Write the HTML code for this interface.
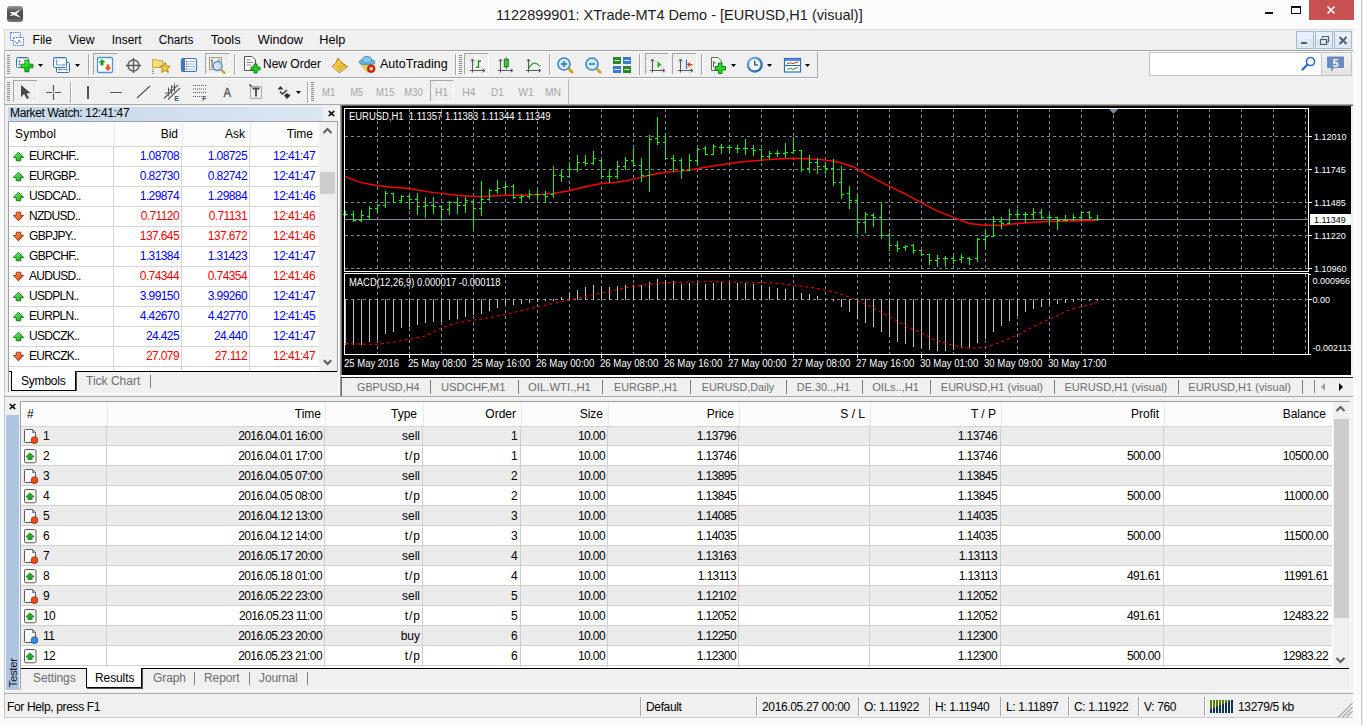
<!DOCTYPE html><html><head><meta charset="utf-8"><style>
*{box-sizing:border-box}
body{margin:0;width:1363px;height:725px;position:relative;overflow:hidden;background:#fbfbfb;font-family:'Liberation Sans', sans-serif;font-size:12px;color:#000}
.a{position:absolute}
.t{position:absolute;white-space:nowrap;line-height:20px;height:20px}
.r{text-align:right}
.n{letter-spacing:-0.6px}
.l{letter-spacing:-0.35px}
svg{position:absolute;overflow:visible}
</style></head><body>

<div class="a" style="left:0;top:0;width:1363px;height:29px;background:#fbfbfb"></div>
<div class="a" style="left:7px;top:6px;width:16px;height:15.5px;border-radius:3px;background:linear-gradient(#9a9a9a 0,#555 35%,#4a4a4a 70%,#7a7a7a 100%)"></div>
<svg style="left:7px;top:6px" width="16" height="16"><path d="M2.5 6 L7.5 6.3 L13.8 3.6 L9.6 7.8 L14.1 12 L7.3 9.2 L2.2 9.9 L5.2 7.9 Z" fill="#fff"/></svg>
<div class="t" style="left:496px;top:5px;font-size:14.5px;color:#222">1122899901: XTrade-MT4 Demo - [EURUSD,H1 (visual)]</div>
<div class="a" style="left:1265px;top:12px;width:8px;height:2px;background:#111"></div>
<div class="a" style="left:1291px;top:6px;width:10px;height:8px;border:1px solid #111;border-top-width:2px"></div>
<div class="a" style="left:1309px;top:0;width:45px;height:20px;background:#c75050"></div>
<svg style="left:1309px;top:0" width="45" height="20"><path d="M18.5 6.5 L25.5 13.5 M25.5 6.5 L18.5 13.5" stroke="#fff" stroke-width="1.6"/></svg>
<div class="a" style="left:1361px;top:0;width:1px;height:725px;background:#c9c9c9"></div><div class="a" style="left:1362px;top:0;width:1px;height:725px;background:#ececec"></div>
<div class="a" style="left:4px;top:29px;width:1349px;height:22px;background:#f0f0f0;border-top:1px solid #dadada;border-left:1px solid #dadada;border-bottom:1px solid #a0a0a0"></div>
<svg style="left:9px;top:31px" width="18" height="16"><rect x="1.5" y="1.5" width="10" height="8" fill="#eef4ff" stroke="#4a7fe8" stroke-dasharray="1.5,0.8"/><rect x="4.5" y="6.5" width="10" height="8" fill="#fff" stroke="#4a7fe8" stroke-dasharray="1.5,0.8"/><path d="M6 10 L8 13 L10 9 L12 12" stroke="#4a7fe8" fill="none" stroke-width="0.9"/></svg>
<svg style="left:0;top:0" width="400" height="50" font-family="Liberation Sans"><text x="32.6" y="44" font-size="12.5" fill="#000" textLength="19.4" lengthAdjust="spacingAndGlyphs">File</text><text x="68.4" y="44" font-size="12.5" fill="#000" textLength="26.2" lengthAdjust="spacingAndGlyphs">View</text><text x="111.80000000000001" y="44" font-size="12.5" fill="#000" textLength="29.7" lengthAdjust="spacingAndGlyphs">Insert</text><text x="158.8" y="44" font-size="12.5" fill="#000" textLength="34.6" lengthAdjust="spacingAndGlyphs">Charts</text><text x="210.70000000000002" y="44" font-size="12.5" fill="#000" textLength="29.9" lengthAdjust="spacingAndGlyphs">Tools</text><text x="257.7" y="44" font-size="12.5" fill="#000" textLength="45.2" lengthAdjust="spacingAndGlyphs">Window</text><text x="319.29999999999995" y="44" font-size="12.5" fill="#000" textLength="26.099999999999998" lengthAdjust="spacingAndGlyphs">Help</text></svg>
<div class="a" style="left:1296px;top:31px;width:18px;height:18px;background:linear-gradient(#e8f1fb 0,#e8f1fb 45%,#dce9f7 46%,#dce9f7);border:1px solid #a6bad0"></div>
<div class="a" style="left:1315px;top:31px;width:18px;height:18px;background:linear-gradient(#e8f1fb 0,#e8f1fb 45%,#dce9f7 46%,#dce9f7);border:1px solid #a6bad0"></div>
<div class="a" style="left:1334px;top:31px;width:18px;height:18px;background:linear-gradient(#e8f1fb 0,#e8f1fb 45%,#dce9f7 46%,#dce9f7);border:1px solid #a6bad0"></div>
<div class="a" style="left:1301px;top:42px;width:6px;height:2px;background:#555d66"></div>
<svg style="left:1315px;top:31px" width="18" height="18"><rect x="5.5" y="8.5" width="6" height="5" fill="none" stroke="#555d66" stroke-width="1.2"/><path d="M7.5 7 V5.5 H13.5 V11 H12" fill="none" stroke="#555d66" stroke-width="1.2"/></svg>
<svg style="left:1334px;top:31px" width="18" height="18"><path d="M5.5 6 L12.5 13 M12.5 6 L5.5 13" stroke="#555d66" stroke-width="2"/></svg>
<div class="a" style="left:4px;top:51px;width:1349px;height:54px;background:#f0f0f0;border-top:1px solid #fff;border-left:1px solid #b9b9b9;border-bottom:1px solid #a9a9a9"></div>
<div class="a" style="left:5px;top:77px;width:813px;height:1px;background:#a9a9a9"></div>
<div class="a" style="left:5px;top:78px;width:813px;height:1px;background:#fff"></div>
<div class="a" style="left:7px;top:55px;width:3px;height:19px;background:repeating-linear-gradient(#8e8e8e 0,#8e8e8e 1px,transparent 1px,transparent 2px)"></div>
<div class="a" style="left:7px;top:82px;width:3px;height:19px;background:repeating-linear-gradient(#8e8e8e 0,#8e8e8e 1px,transparent 1px,transparent 2px)"></div>
<svg style="left:15px;top:56px" width="20" height="18"><defs><linearGradient id="gpl" x1="0" y1="0" x2="0.6" y2="1"><stop offset="0" stop-color="#a8ffa8"/><stop offset="0.5" stop-color="#22e022"/><stop offset="1" stop-color="#08a808"/></linearGradient></defs><rect x="1.5" y="1.5" width="12" height="10" rx="1" fill="#fafcff" stroke="#2f74c0"/><path d="M2 2.5 H13.5" stroke="#b8d4f0"/><path d="M4.5 4.5 V9.5 M3.3 5.8 L4.5 4.5 L5.7 5.8 M3.3 8.2 L4.5 9.5 L5.7 8.2" stroke="#7a98b8" fill="none"/><path d="M9.9 4.2 H13.9 V8.2 H17.9 V11.8 H13.9 V15.8 H9.9 V11.8 H6.2 V8.2 H9.9 Z" fill="url(#gpl)" stroke="#067a06" stroke-width="0.9"/></svg>
<svg style="left:38px;top:64px" width="6" height="4"><path d="M0 0 H5 L2.5 3 Z" fill="#000"/></svg>
<svg style="left:52px;top:56px" width="20" height="18"><rect x="4.5" y="6.5" width="13" height="10" rx="1" fill="#fafcff" stroke="#2f74c0"/><rect x="1.5" y="1.5" width="13" height="10" rx="1" fill="#fafcff" stroke="#2f74c0"/><path d="M2 2.5 H14" stroke="#b8d4f0"/><path d="M4.5 4 V9 H12.5 M3.3 5.2 L4.5 4 L5.7 5.2 M11.3 7.8 L12.5 9 L11.3 10.2 M6.5 13.5 H15.5 M7.7 12.3 L6.5 13.5 L7.7 14.7 M14.3 12.3 L15.5 13.5 L14.3 14.7" stroke="#7a98b8" fill="none"/></svg>
<svg style="left:75px;top:64px" width="6" height="4"><path d="M0 0 H5 L2.5 3 Z" fill="#000"/></svg>
<div class="a" style="left:88px;top:54px;width:1px;height:21px;background:#a8a8a8;box-shadow:1px 0 0 #fff"></div>
<div class="a" style="left:93px;top:53px;width:25px;height:22px;border:1px solid #a6a6a6;border-right-color:#fff;border-bottom-color:#fff;background:#f6f6f6 repeating-linear-gradient(45deg,#e9e9e9 0,#e9e9e9 1px,#f6f6f6 1px,#f6f6f6 2px)"></div>
<svg style="left:96px;top:56px" width="18" height="18"><rect x="1.5" y="1.5" width="15" height="15" rx="1.5" fill="#fff" stroke="#4f95dc" stroke-width="1.3"/><path d="M6 3 L9.5 6.5 H7.5 V9.5 H4.5 V6.5 H2.5 Z" fill="#17a517"/><path d="M12 15 L8.5 11.5 H10.5 V8.5 H13.5 V11.5 H15.5 Z" fill="#e8542a"/></svg>
<svg style="left:125px;top:57px" width="18" height="18"><circle cx="8.5" cy="8.5" r="5.5" fill="none" stroke="#5a5a5a" stroke-width="1.4"/><path d="M8.5 1 V16 M1 8.5 H16" stroke="#5a5a5a" stroke-width="1.4"/></svg>
<svg style="left:151px;top:56px" width="20" height="20"><path d="M1.5 3.5 H5.5 L6.5 4.5 H11.5 V11.5 H1.5 Z" fill="#f5dc7a" stroke="#c9a640"/><path d="M14 6.5 L15.6 10 L19.3 10.3 L16.5 12.7 L17.4 16.5 L14 14.5 L10.6 16.5 L11.5 12.7 L8.7 10.3 L12.4 10 Z" fill="#f0c838" stroke="#b08a20"/><path d="M2 13 V18" stroke="#333" stroke-dasharray="1,1"/></svg>
<svg style="left:180px;top:57px" width="18" height="16"><rect x="1.5" y="1.5" width="15" height="13" rx="1.5" fill="#fff" stroke="#3b78c2" stroke-width="1.2"/><rect x="2" y="2" width="3" height="12" fill="#3b78c2"/><path d="M7 4.5 H15 M7 7 H15 M7 9.5 H15 M7 12 H15" stroke="#9ab8e0"/><path d="M6 4.5 H7 M6 9.5 H7" stroke="#e02020"/><path d="M6 7 H7 M6 12 H7" stroke="#222"/></svg>
<div class="a" style="left:205px;top:53px;width:25px;height:22px;border:1px solid #a6a6a6;border-right-color:#fff;border-bottom-color:#fff;background:#f6f6f6 repeating-linear-gradient(45deg,#e9e9e9 0,#e9e9e9 1px,#f6f6f6 1px,#f6f6f6 2px)"></div>
<svg style="left:208px;top:56px" width="20" height="20"><rect x="1.5" y="1.5" width="12" height="12" fill="#f3f0e6" stroke="#a09a80"/><path d="M4 3 V12 M11 3 V12 M3 5 H5 M10 8 H12" stroke="#666"/><circle cx="9.5" cy="10" r="4.5" fill="#cfe3f5" fill-opacity="0.85" stroke="#5a8fc8" stroke-width="1.5"/><path d="M12.8 13.3 L17 17.5" stroke="#c8a020" stroke-width="2.2"/></svg>
<div class="a" style="left:234px;top:54px;width:1px;height:21px;background:#a8a8a8;box-shadow:1px 0 0 #fff"></div>
<svg style="left:243px;top:55px" width="20" height="20"><path d="M1.5 1.5 H9 L12.5 5 V15.5 H1.5 Z" fill="#fff" stroke="#555"/><path d="M3.5 5 H8 M3.5 7.5 H10 M3.5 10 H8" stroke="#888"/><path d="M11 9 H14 V12 H17 V15 H14 V18 H11 V15 H8 V12 H11 Z" fill="#22cc22" stroke="#0a8a0a"/></svg>
<div class="t" style="left:263px;top:54px;font-size:12px">New Order</div>
<svg style="left:330px;top:56px" width="20" height="18"><defs><linearGradient id="gme" x1="0" y1="0" x2="1" y2="1"><stop offset="0" stop-color="#ffe860"/><stop offset="1" stop-color="#d09810"/></linearGradient></defs><path d="M8.2 2.1 Q9 5 17.4 10.7 L9.5 16.7 L2.3 10.9 Q6 8 8.2 2.1 Z" fill="url(#gme)" stroke="#a86a10" stroke-width="0.9"/><path d="M3.5 11.5 L9.5 15.5 L16 10.8" fill="none" stroke="#f8e8b0" stroke-width="0.9"/></svg>
<svg style="left:357px;top:55px" width="20" height="20"><path d="M3 8.5 H18 L11 17.5 Z" fill="#f2d84a" stroke="#c8a020" stroke-width="0.8"/><ellipse cx="10" cy="7" rx="8" ry="2.8" fill="#6ab6e6" stroke="#3a86b6" stroke-width="0.8"/><ellipse cx="10" cy="4.8" rx="4.6" ry="3.3" fill="#82c6f0" stroke="#3a86b6" stroke-width="0.8"/><circle cx="14.2" cy="13.7" r="3.8" fill="#e42810" stroke="#a81008" stroke-width="0.8"/><rect x="12.8" y="12.3" width="2.8" height="2.8" fill="#fff"/></svg>
<div class="t" style="left:380px;top:54px;font-size:12.5px">AutoTrading</div>
<div class="a" style="left:455px;top:54px;width:1px;height:21px;background:#a8a8a8;box-shadow:1px 0 0 #fff"></div>
<div class="a" style="left:459px;top:55px;width:3px;height:19px;background:repeating-linear-gradient(#8e8e8e 0,#8e8e8e 1px,transparent 1px,transparent 2px)"></div>
<div class="a" style="left:464px;top:53px;width:25px;height:22px;border:1px solid #a6a6a6;border-right-color:#fff;border-bottom-color:#fff;background:#f6f6f6 repeating-linear-gradient(45deg,#e9e9e9 0,#e9e9e9 1px,#f6f6f6 1px,#f6f6f6 2px)"></div>
<svg style="left:469px;top:57px" width="18" height="18"><path d="M3.5 2.5 V15.5 M1 13.5 H15.5" stroke="#5a5a5a" stroke-width="1.1" fill="none"/><path d="M1.8 4.3 L3.5 2 L5.2 4.3 M13.6 11.8 L16 13.5 L13.6 15.2" stroke="#5a5a5a" fill="none"/><path d="M9.5 3.5 V11 M9.5 4 H12 M7 10.3 H9.5" stroke="#1e8a1e" stroke-width="1.3" fill="none"/></svg>
<svg style="left:497px;top:57px" width="18" height="18"><path d="M3.5 2.5 V15.5 M1 13.5 H15.5" stroke="#5a5a5a" stroke-width="1.1" fill="none"/><path d="M1.8 4.3 L3.5 2 L5.2 4.3 M13.6 11.8 L16 13.5 L13.6 15.2" stroke="#5a5a5a" fill="none"/><path d="M9.3 0.5 V12" stroke="#1a6a1a"/><rect x="7.3" y="2.3" width="4" height="7.4" fill="#3ccc3c" stroke="#1a7a1a"/></svg>
<svg style="left:525px;top:57px" width="18" height="18"><path d="M3.5 2.5 V15.5 M1 13.5 H15.5" stroke="#5a5a5a" stroke-width="1.1" fill="none"/><path d="M1.8 4.3 L3.5 2 L5.2 4.3 M13.6 11.8 L16 13.5 L13.6 15.2" stroke="#5a5a5a" fill="none"/><path d="M4 11 Q9 2 15 9.5" stroke="#2a9a2a" stroke-width="1.2" fill="none"/></svg>
<div class="a" style="left:549px;top:54px;width:1px;height:21px;background:#a8a8a8;box-shadow:1px 0 0 #fff"></div>
<svg style="left:556px;top:56px" width="20" height="20"><circle cx="8" cy="8" r="6" fill="#d8ecfb" stroke="#3a86d0" stroke-width="1.6"/><path d="M5 8 H11 M8 5 V11" stroke="#3a86d0" stroke-width="1.8"/><path d="M12.5 12.5 L17 17" stroke="#d0a020" stroke-width="2.6"/></svg>
<svg style="left:584px;top:56px" width="20" height="20"><circle cx="8" cy="8" r="6" fill="#d8ecfb" stroke="#3a86d0" stroke-width="1.6"/><path d="M5 8 H11" stroke="#3a86d0" stroke-width="1.8"/><path d="M12.5 12.5 L17 17" stroke="#d0a020" stroke-width="2.6"/></svg>
<svg style="left:612px;top:56px" width="20" height="18"><rect x="1" y="1" width="8" height="7" fill="#2a8a2a"/><rect x="11" y="1" width="8" height="7" fill="#3a7ad0"/><rect x="1" y="10" width="8" height="7" fill="#3a7ad0"/><rect x="11" y="10" width="8" height="7" fill="#2a8a2a"/><path d="M2.5 4.5 H7.5 M12.5 4.5 H17.5 M2.5 13.5 H7.5 M12.5 13.5 H17.5" stroke="#fff"/></svg>
<div class="a" style="left:639px;top:54px;width:1px;height:21px;background:#a8a8a8;box-shadow:1px 0 0 #fff"></div>
<div class="a" style="left:645px;top:53px;width:24px;height:22px;border:1px solid #a6a6a6;border-right-color:#fff;border-bottom-color:#fff;background:#f6f6f6 repeating-linear-gradient(45deg,#e9e9e9 0,#e9e9e9 1px,#f6f6f6 1px,#f6f6f6 2px)"></div>
<svg style="left:649px;top:57px" width="18" height="18"><path d="M3.5 2.5 V15.5 M1 13.5 H15.5" stroke="#5a5a5a" stroke-width="1.1" fill="none"/><path d="M1.8 4.3 L3.5 2 L5.2 4.3 M13.6 11.8 L16 13.5 L13.6 15.2" stroke="#5a5a5a" fill="none"/><path d="M8.5 4.3 L12.5 7.6 L8.5 11 Z" fill="#2aaa2a"/></svg>
<div class="a" style="left:672px;top:53px;width:25px;height:22px;border:1px solid #a6a6a6;border-right-color:#fff;border-bottom-color:#fff;background:#f6f6f6 repeating-linear-gradient(45deg,#e9e9e9 0,#e9e9e9 1px,#f6f6f6 1px,#f6f6f6 2px)"></div>
<svg style="left:677px;top:57px" width="18" height="18"><path d="M3.5 2.5 V15.5 M1 13.5 H15.5" stroke="#5a5a5a" stroke-width="1.1" fill="none"/><path d="M1.8 4.3 L3.5 2 L5.2 4.3 M13.6 11.8 L16 13.5 L13.6 15.2" stroke="#5a5a5a" fill="none"/><path d="M9.5 3 V12" stroke="#2a6ab0" stroke-width="1.2"/><path d="M15.5 7.6 H11 M13 5.6 L11 7.6 L13 9.6" stroke="#d84010" stroke-width="1.3" fill="none"/></svg>
<div class="a" style="left:701px;top:54px;width:1px;height:21px;background:#a8a8a8;box-shadow:1px 0 0 #fff"></div>
<svg style="left:710px;top:56px" width="20" height="20"><path d="M1.5 1.5 H8 L11.5 5 V14.5 H1.5 Z" fill="#fafafa" stroke="#666"/><path d="M3.5 5 V11 M3.5 7 H6" stroke="#666" fill="none"/><path d="M8.5 7 H12 V10.5 H15.5 V14 H12 V17.5 H8.5 V14 H5 V10.5 H8.5 Z" fill="#2ad42a" stroke="#0a8a0a"/></svg>
<svg style="left:731px;top:64px" width="6" height="4"><path d="M0 0 H5 L2.5 3 Z" fill="#000"/></svg>
<svg style="left:746px;top:56px" width="18" height="18"><defs><radialGradient id="gcl" cx="0.35" cy="0.3" r="0.8"><stop offset="0" stop-color="#8ac8ff"/><stop offset="1" stop-color="#1a58b0"/></radialGradient></defs><circle cx="8.8" cy="8.7" r="8" fill="url(#gcl)"/><circle cx="8.8" cy="8.7" r="5.6" fill="#f4f8fc"/><path d="M8.8 4.8 V9 H12" stroke="#222" stroke-width="1.1" fill="none"/></svg>
<svg style="left:767px;top:64px" width="6" height="4"><path d="M0 0 H5 L2.5 3 Z" fill="#000"/></svg>
<svg style="left:783px;top:57px" width="20" height="16"><rect x="1.5" y="1.5" width="16" height="13.5" fill="#fff" stroke="#2f6fc0" stroke-width="1.2"/><rect x="2" y="2" width="15" height="2" fill="#5a90d8"/><path d="M2 8.5 H17" stroke="#2f6fc0"/><path d="M4 7 L7 5.8 L10 6.5 L15 5" stroke="#c03020" fill="none"/><path d="M4 12.5 L7 11.2 L10 12.5 L15 10.5" stroke="#2a9a2a" fill="none"/></svg>
<svg style="left:805px;top:64px" width="6" height="4"><path d="M0 0 H5 L2.5 3 Z" fill="#000"/></svg>
<div class="a" style="left:817px;top:52px;width:1px;height:25px;background:#a9a9a9"></div>
<div class="a" style="left:1149px;top:52px;width:172px;height:24px;background:#fff;border:1px solid #c3c3c3;border-right:none"></div>
<svg style="left:1300px;top:56px" width="18" height="16"><circle cx="10.5" cy="5.5" r="4" fill="none" stroke="#2f6fd0" stroke-width="1.6"/><path d="M7.5 8.5 L2.5 13.5" stroke="#2f6fd0" stroke-width="2.4" stroke-linecap="round"/></svg>
<div class="a" style="left:1321px;top:52px;width:31px;height:24px;background:linear-gradient(#f3f3f3,#e3e3e3);border:1px solid #c3c3c3"></div>
<svg style="left:1326px;top:56px" width="20" height="18"><path d="M1 1.5 Q1 0.5 2 0.5 H17 Q18 0.5 18 1.5 V11 Q18 12 17 12 H8 L5 15.5 V12 H2 Q1 12 1 11 Z" fill="#6a8bc4"/><text x="9.5" y="10.5" text-anchor="middle" font-size="11" font-weight="bold" font-family="Liberation Sans" fill="#fff">5</text></svg>
<div class="a" style="left:13px;top:80px;width:25px;height:22px;border:1px solid #a6a6a6;border-right-color:#fff;border-bottom-color:#fff;background:#f6f6f6 repeating-linear-gradient(45deg,#e9e9e9 0,#e9e9e9 1px,#f6f6f6 1px,#f6f6f6 2px)"></div>
<svg style="left:19px;top:84px" width="14" height="16"><path d="M2 1 L2 13 L5 10 L8 15 L10 14 L7.5 9.5 L11.5 9 Z" fill="#4a4a4a"/></svg>
<svg style="left:45px;top:84px" width="18" height="18"><path d="M8.5 1 V7.5 M8.5 9.5 V16 M1 8.5 H7.5 M9.5 8.5 H16" stroke="#555" stroke-width="1.2"/></svg>
<div class="a" style="left:70px;top:82px;width:1px;height:21px;background:#a8a8a8;box-shadow:1px 0 0 #fff"></div>
<div class="a" style="left:87px;top:86px;width:2px;height:13px;background:#555"></div>
<div class="a" style="left:110px;top:92px;width:12px;height:1px;background:#555"></div>
<svg style="left:136px;top:85px" width="16" height="14"><path d="M1 13 L14 1" stroke="#555" stroke-width="1.1"/></svg>
<svg style="left:150px;top:78px" width="40" height="27"><path d="M14 20.5 L28 7 M18 21.5 L30 10" stroke="#5a5a5a" stroke-width="1.1" fill="none"/><path d="M18.5 9.5 V18.5 M21.5 7 V16 M24.5 5.5 V13.5 M15 15 H18 M19 12 H22 M22 9 H25" stroke="#5a5a5a" fill="none"/><text x="24.5" y="23" font-size="6.5" font-weight="bold" font-family="Liberation Sans" fill="#4a4a4a">E</text></svg>
<svg style="left:190px;top:78px" width="20" height="27"><path d="M3 7.5 H16.5 M3 11 H16.5 M3 14.5 H16.5 M3 18.5 H12" stroke="#5a5a5a" stroke-dasharray="1,1"/><text x="12.3" y="23" font-size="6.5" font-weight="bold" font-family="Liberation Sans" fill="#4a4a4a">F</text></svg>
<svg style="left:220px;top:78px" width="16" height="27"><text x="3.5" y="18.8" font-size="12" font-family="Liberation Sans" fill="#555" stroke="#555" stroke-width="0.35" textLength="7.5" lengthAdjust="spacingAndGlyphs">A</text></svg>
<svg style="left:248px;top:84px" width="16" height="16"><rect x="2.5" y="2.5" width="11" height="12" fill="none" stroke="#666" stroke-dasharray="1,1"/><path d="M1 1 H3 V3" stroke="#222" fill="none"/><path d="M4.5 4.5 H11.5 M8 4.5 V12.5" stroke="#4a4a4a" stroke-width="1.8"/></svg>
<svg style="left:276px;top:84px" width="18" height="18"><path d="M1.5 5.5 L4.5 2 L7.5 5.5 Z" fill="#333"/><path d="M4 7.5 L6.5 10 L11 6" stroke="#333" stroke-width="1.5" fill="none"/><path d="M8 11.5 L11 9 L14.5 11.5 L11 15 Z" fill="#333"/></svg>
<svg style="left:296px;top:91px" width="6" height="4"><path d="M0 0 H5 L2.5 3 Z" fill="#000"/></svg>
<div class="a" style="left:307px;top:82px;width:1px;height:21px;background:#a8a8a8;box-shadow:1px 0 0 #fff"></div>
<div class="a" style="left:311px;top:82px;width:3px;height:19px;background:repeating-linear-gradient(#8e8e8e 0,#8e8e8e 1px,transparent 1px,transparent 2px)"></div>
<div class="a" style="left:430px;top:80px;width:24px;height:22px;border:1px solid #a6a6a6;border-right-color:#fff;border-bottom-color:#fff;background:#f6f6f6 repeating-linear-gradient(45deg,#e9e9e9 0,#e9e9e9 1px,#f6f6f6 1px,#f6f6f6 2px)"></div>
<svg style="left:0;top:0" width="1363" height="110" font-family="Liberation Sans"><text x="322.1" y="96.2" font-size="11" fill="#a6a6a6" textLength="13.3" lengthAdjust="spacingAndGlyphs">M1</text><text x="350.5" y="96.2" font-size="11" fill="#a6a6a6" textLength="12.7" lengthAdjust="spacingAndGlyphs">M5</text><text x="375.9" y="96.2" font-size="11" fill="#a6a6a6" textLength="18.6" lengthAdjust="spacingAndGlyphs">M15</text><text x="404.3" y="96.2" font-size="11" fill="#a6a6a6" textLength="18.4" lengthAdjust="spacingAndGlyphs">M30</text><text x="435.1" y="96.2" font-size="11" fill="#a6a6a6" textLength="12.9" lengthAdjust="spacingAndGlyphs">H1</text><text x="462.2" y="96.2" font-size="11" fill="#a6a6a6" textLength="13.3" lengthAdjust="spacingAndGlyphs">H4</text><text x="491.0" y="96.2" font-size="11" fill="#a6a6a6" textLength="12.9" lengthAdjust="spacingAndGlyphs">D1</text><text x="518.3" y="96.2" font-size="11" fill="#a6a6a6" textLength="15.4" lengthAdjust="spacingAndGlyphs">W1</text><text x="545.0" y="96.2" font-size="11" fill="#a6a6a6" textLength="16" lengthAdjust="spacingAndGlyphs">MN</text></svg>
<div class="a" style="left:568px;top:79px;width:1px;height:25px;background:#b9b9b9"></div>
<div class="a" style="left:4px;top:105px;width:337px;height:292px;background:#f0f0f0;border-left:1px solid #c4c4c4"></div>
<div class="a" style="left:4px;top:104px;width:337px;height:1px;background:#a9a9a9"></div>
<div class="a" style="left:8px;top:107px;width:315px;height:14px;background:linear-gradient(90deg,#c5d7eb,#dbe6f2)"></div>
<div class="t l" style="left:10px;top:104px;line-height:19px">Market Watch: 12:41:47</div>
<svg style="left:327px;top:109px" width="9" height="9"><path d="M1.8 2 L7.2 7 M7.2 2 L1.8 7" stroke="#000" stroke-width="1.7"/></svg>
<div class="a" style="left:8px;top:121px;width:330px;height:251px;background:#fff;border:1px solid #a0a0a0;border-bottom:none"></div>
<div class="a" style="left:9px;top:122px;width:310px;height:24px;background:#fcfcfc"></div>
<div class="a" style="left:114px;top:122px;width:1px;height:24px;background:#e3ebf5"></div>
<div class="a" style="left:182px;top:122px;width:1px;height:24px;background:#e3ebf5"></div>
<div class="a" style="left:250px;top:122px;width:1px;height:24px;background:#e3ebf5"></div>
<div class="t" style="left:15px;top:124px;letter-spacing:0.2px">Symbol</div>
<div class="t r" style="left:118px;width:60px;top:124px">Bid</div>
<div class="t r" style="left:185px;width:60px;top:124px">Ask</div>
<div class="t r" style="left:253px;width:60px;top:124px">Time</div>
<div class="a" style="left:9px;top:146px;width:310px;height:1px;background:#d5d5d5"></div>
<div class="a" style="left:9px;top:166px;width:310px;height:1px;background:#d5d5d5"></div>
<div class="a" style="left:9px;top:186px;width:310px;height:1px;background:#d5d5d5"></div>
<div class="a" style="left:9px;top:206px;width:310px;height:1px;background:#d5d5d5"></div>
<div class="a" style="left:9px;top:226px;width:310px;height:1px;background:#d5d5d5"></div>
<div class="a" style="left:9px;top:246px;width:310px;height:1px;background:#d5d5d5"></div>
<div class="a" style="left:9px;top:266px;width:310px;height:1px;background:#d5d5d5"></div>
<div class="a" style="left:9px;top:286px;width:310px;height:1px;background:#d5d5d5"></div>
<div class="a" style="left:9px;top:306px;width:310px;height:1px;background:#d5d5d5"></div>
<div class="a" style="left:9px;top:326px;width:310px;height:1px;background:#d5d5d5"></div>
<div class="a" style="left:9px;top:346px;width:310px;height:1px;background:#d5d5d5"></div>
<div class="a" style="left:9px;top:366px;width:310px;height:1px;background:#d5d5d5"></div>
<div class="a" style="left:113px;top:147px;width:1px;height:225px;background:#d5d5d5"></div>
<div class="a" style="left:181px;top:147px;width:1px;height:225px;background:#d5d5d5"></div>
<div class="a" style="left:249px;top:147px;width:1px;height:225px;background:#d5d5d5"></div>
<svg style="left:13px;top:151px" width="11" height="11"><defs><linearGradient id="gu" x1="0" y1="0" x2="1" y2="1"><stop offset="0" stop-color="#7ef07e"/><stop offset="1" stop-color="#12a012"/></linearGradient><linearGradient id="gd" x1="0" y1="0" x2="1" y2="1"><stop offset="0" stop-color="#ff9a6a"/><stop offset="1" stop-color="#e03a08"/></linearGradient></defs><path d="M5.5 1.2 L10.6 6.4 H7.8 V9.2 Q7.8 9.8 7.2 9.8 H3.8 Q3.2 9.8 3.2 9.2 V6.4 H0.4 Z" fill="url(#gu)" stroke="#0a700a" stroke-width="0.9"/></svg>
<div class="t" style="left:29px;top:146px;letter-spacing:-0.7px">EURCHF..</div>
<div class="t r n" style="left:119px;width:60px;top:146px;color:#0000ff">1.08708</div>
<div class="t r n" style="left:187px;width:60px;top:146px;color:#0000ff">1.08725</div>
<div class="t r n" style="left:255px;width:60px;top:146px;color:#0000ff">12:41:47</div>
<svg style="left:13px;top:171px" width="11" height="11"><defs><linearGradient id="gu" x1="0" y1="0" x2="1" y2="1"><stop offset="0" stop-color="#7ef07e"/><stop offset="1" stop-color="#12a012"/></linearGradient><linearGradient id="gd" x1="0" y1="0" x2="1" y2="1"><stop offset="0" stop-color="#ff9a6a"/><stop offset="1" stop-color="#e03a08"/></linearGradient></defs><path d="M5.5 1.2 L10.6 6.4 H7.8 V9.2 Q7.8 9.8 7.2 9.8 H3.8 Q3.2 9.8 3.2 9.2 V6.4 H0.4 Z" fill="url(#gu)" stroke="#0a700a" stroke-width="0.9"/></svg>
<div class="t" style="left:29px;top:166px;letter-spacing:-0.7px">EURGBP..</div>
<div class="t r n" style="left:119px;width:60px;top:166px;color:#0000ff">0.82730</div>
<div class="t r n" style="left:187px;width:60px;top:166px;color:#0000ff">0.82742</div>
<div class="t r n" style="left:255px;width:60px;top:166px;color:#0000ff">12:41:47</div>
<svg style="left:13px;top:191px" width="11" height="11"><defs><linearGradient id="gu" x1="0" y1="0" x2="1" y2="1"><stop offset="0" stop-color="#7ef07e"/><stop offset="1" stop-color="#12a012"/></linearGradient><linearGradient id="gd" x1="0" y1="0" x2="1" y2="1"><stop offset="0" stop-color="#ff9a6a"/><stop offset="1" stop-color="#e03a08"/></linearGradient></defs><path d="M5.5 1.2 L10.6 6.4 H7.8 V9.2 Q7.8 9.8 7.2 9.8 H3.8 Q3.2 9.8 3.2 9.2 V6.4 H0.4 Z" fill="url(#gu)" stroke="#0a700a" stroke-width="0.9"/></svg>
<div class="t" style="left:29px;top:186px;letter-spacing:-0.7px">USDCAD..</div>
<div class="t r n" style="left:119px;width:60px;top:186px;color:#0000ff">1.29874</div>
<div class="t r n" style="left:187px;width:60px;top:186px;color:#0000ff">1.29884</div>
<div class="t r n" style="left:255px;width:60px;top:186px;color:#0000ff">12:41:46</div>
<svg style="left:13px;top:211px" width="11" height="11"><path d="M5.5 9.8 L10.6 4.4 H7.8 V1.8 Q7.8 1.2 7.2 1.2 H3.8 Q3.2 1.2 3.2 1.8 V4.4 H0.4 Z" fill="url(#gd)" stroke="#8a2a06" stroke-width="0.9"/></svg>
<div class="t" style="left:29px;top:206px;letter-spacing:-0.7px">NZDUSD..</div>
<div class="t r n" style="left:119px;width:60px;top:206px;color:#ff0000">0.71120</div>
<div class="t r n" style="left:187px;width:60px;top:206px;color:#ff0000">0.71131</div>
<div class="t r n" style="left:255px;width:60px;top:206px;color:#ff0000">12:41:46</div>
<svg style="left:13px;top:231px" width="11" height="11"><path d="M5.5 9.8 L10.6 4.4 H7.8 V1.8 Q7.8 1.2 7.2 1.2 H3.8 Q3.2 1.2 3.2 1.8 V4.4 H0.4 Z" fill="url(#gd)" stroke="#8a2a06" stroke-width="0.9"/></svg>
<div class="t" style="left:29px;top:226px;letter-spacing:-0.7px">GBPJPY..</div>
<div class="t r n" style="left:119px;width:60px;top:226px;color:#ff0000">137.645</div>
<div class="t r n" style="left:187px;width:60px;top:226px;color:#ff0000">137.672</div>
<div class="t r n" style="left:255px;width:60px;top:226px;color:#ff0000">12:41:46</div>
<svg style="left:13px;top:251px" width="11" height="11"><defs><linearGradient id="gu" x1="0" y1="0" x2="1" y2="1"><stop offset="0" stop-color="#7ef07e"/><stop offset="1" stop-color="#12a012"/></linearGradient><linearGradient id="gd" x1="0" y1="0" x2="1" y2="1"><stop offset="0" stop-color="#ff9a6a"/><stop offset="1" stop-color="#e03a08"/></linearGradient></defs><path d="M5.5 1.2 L10.6 6.4 H7.8 V9.2 Q7.8 9.8 7.2 9.8 H3.8 Q3.2 9.8 3.2 9.2 V6.4 H0.4 Z" fill="url(#gu)" stroke="#0a700a" stroke-width="0.9"/></svg>
<div class="t" style="left:29px;top:246px;letter-spacing:-0.7px">GBPCHF..</div>
<div class="t r n" style="left:119px;width:60px;top:246px;color:#0000ff">1.31384</div>
<div class="t r n" style="left:187px;width:60px;top:246px;color:#0000ff">1.31423</div>
<div class="t r n" style="left:255px;width:60px;top:246px;color:#0000ff">12:41:47</div>
<svg style="left:13px;top:271px" width="11" height="11"><path d="M5.5 9.8 L10.6 4.4 H7.8 V1.8 Q7.8 1.2 7.2 1.2 H3.8 Q3.2 1.2 3.2 1.8 V4.4 H0.4 Z" fill="url(#gd)" stroke="#8a2a06" stroke-width="0.9"/></svg>
<div class="t" style="left:29px;top:266px;letter-spacing:-0.7px">AUDUSD..</div>
<div class="t r n" style="left:119px;width:60px;top:266px;color:#ff0000">0.74344</div>
<div class="t r n" style="left:187px;width:60px;top:266px;color:#ff0000">0.74354</div>
<div class="t r n" style="left:255px;width:60px;top:266px;color:#ff0000">12:41:46</div>
<svg style="left:13px;top:291px" width="11" height="11"><defs><linearGradient id="gu" x1="0" y1="0" x2="1" y2="1"><stop offset="0" stop-color="#7ef07e"/><stop offset="1" stop-color="#12a012"/></linearGradient><linearGradient id="gd" x1="0" y1="0" x2="1" y2="1"><stop offset="0" stop-color="#ff9a6a"/><stop offset="1" stop-color="#e03a08"/></linearGradient></defs><path d="M5.5 1.2 L10.6 6.4 H7.8 V9.2 Q7.8 9.8 7.2 9.8 H3.8 Q3.2 9.8 3.2 9.2 V6.4 H0.4 Z" fill="url(#gu)" stroke="#0a700a" stroke-width="0.9"/></svg>
<div class="t" style="left:29px;top:286px;letter-spacing:-0.7px">USDPLN..</div>
<div class="t r n" style="left:119px;width:60px;top:286px;color:#0000ff">3.99150</div>
<div class="t r n" style="left:187px;width:60px;top:286px;color:#0000ff">3.99260</div>
<div class="t r n" style="left:255px;width:60px;top:286px;color:#0000ff">12:41:47</div>
<svg style="left:13px;top:311px" width="11" height="11"><defs><linearGradient id="gu" x1="0" y1="0" x2="1" y2="1"><stop offset="0" stop-color="#7ef07e"/><stop offset="1" stop-color="#12a012"/></linearGradient><linearGradient id="gd" x1="0" y1="0" x2="1" y2="1"><stop offset="0" stop-color="#ff9a6a"/><stop offset="1" stop-color="#e03a08"/></linearGradient></defs><path d="M5.5 1.2 L10.6 6.4 H7.8 V9.2 Q7.8 9.8 7.2 9.8 H3.8 Q3.2 9.8 3.2 9.2 V6.4 H0.4 Z" fill="url(#gu)" stroke="#0a700a" stroke-width="0.9"/></svg>
<div class="t" style="left:29px;top:306px;letter-spacing:-0.7px">EURPLN..</div>
<div class="t r n" style="left:119px;width:60px;top:306px;color:#0000ff">4.42670</div>
<div class="t r n" style="left:187px;width:60px;top:306px;color:#0000ff">4.42770</div>
<div class="t r n" style="left:255px;width:60px;top:306px;color:#0000ff">12:41:45</div>
<svg style="left:13px;top:331px" width="11" height="11"><defs><linearGradient id="gu" x1="0" y1="0" x2="1" y2="1"><stop offset="0" stop-color="#7ef07e"/><stop offset="1" stop-color="#12a012"/></linearGradient><linearGradient id="gd" x1="0" y1="0" x2="1" y2="1"><stop offset="0" stop-color="#ff9a6a"/><stop offset="1" stop-color="#e03a08"/></linearGradient></defs><path d="M5.5 1.2 L10.6 6.4 H7.8 V9.2 Q7.8 9.8 7.2 9.8 H3.8 Q3.2 9.8 3.2 9.2 V6.4 H0.4 Z" fill="url(#gu)" stroke="#0a700a" stroke-width="0.9"/></svg>
<div class="t" style="left:29px;top:326px;letter-spacing:-0.7px">USDCZK..</div>
<div class="t r n" style="left:119px;width:60px;top:326px;color:#0000ff">24.425</div>
<div class="t r n" style="left:187px;width:60px;top:326px;color:#0000ff">24.440</div>
<div class="t r n" style="left:255px;width:60px;top:326px;color:#0000ff">12:41:47</div>
<svg style="left:13px;top:351px" width="11" height="11"><path d="M5.5 9.8 L10.6 4.4 H7.8 V1.8 Q7.8 1.2 7.2 1.2 H3.8 Q3.2 1.2 3.2 1.8 V4.4 H0.4 Z" fill="url(#gd)" stroke="#8a2a06" stroke-width="0.9"/></svg>
<div class="t" style="left:29px;top:346px;letter-spacing:-0.7px">EURCZK..</div>
<div class="t r n" style="left:119px;width:60px;top:346px;color:#ff0000">27.079</div>
<div class="t r n" style="left:187px;width:60px;top:346px;color:#ff0000">27.112</div>
<div class="t r n" style="left:255px;width:60px;top:346px;color:#ff0000">12:41:47</div>
<div class="a" style="left:319px;top:122px;width:18px;height:250px;background:#f0f0f0"></div>
<svg style="left:322px;top:127px" width="12" height="8"><path d="M1.5 6 L5.5 2 L9.5 6" stroke="#606060" stroke-width="2" fill="none"/></svg>
<svg style="left:322px;top:358px" width="12" height="8"><path d="M1.8 2.3 L5.5 6 L9.2 2.3" stroke="#606060" stroke-width="2.2" fill="none"/></svg>
<div class="a" style="left:320px;top:172px;width:15px;height:22px;background:#cdcdcd"></div>
<div class="a" style="left:8px;top:371px;width:329px;height:1px;background:#000"></div>
<div class="a" style="left:8px;top:371px;width:1px;height:21px;background:#a0a0a0"></div>
<div class="a" style="left:11px;top:371px;width:65px;height:20px;background:#fff;border:1px solid #000;border-top:none;box-shadow:1px 0 0 #505050"></div>
<div class="t" style="left:21px;top:371px;letter-spacing:-0.2px">Symbols</div>
<div class="t" style="left:86px;top:371px;color:#6d6d6d">Tick Chart</div>
<div class="a" style="left:150px;top:375px;width:1px;height:13px;background:#808080"></div>
<div class="a" style="left:4px;top:393px;width:334px;height:1px;background:#fff"></div>
<div class="a" style="left:338px;top:105px;width:1px;height:289px;background:#fff"></div>
<div class="a" style="left:4px;top:396px;width:1349px;height:1px;background:#a9a9a9"></div>
<svg style="left:0;top:0" width="1363" height="725" font-family="Liberation Sans"><rect x="339" y="105" width="1014" height="272" fill="#f0f0f0"/><rect x="342" y="106" width="1009" height="269" fill="#000"/><path d="M339.5 105 V396" stroke="#f0f0f0"/><path d="M340.5 105 V396" stroke="#a0a0a0"/><path d="M341.5 105 V396" stroke="#696969"/><path d="M341 105.5 H1353" stroke="#696969"/><path d="M341 375.5 H1353 M341 376.5 H1353" stroke="#fff"/><path d="M341 377.5 H1353" stroke="#222"/><path d="M377.5 109 V271 M377.5 274 V354 M409.5 109 V271 M409.5 274 V354 M441.5 109 V271 M441.5 274 V354 M473.5 109 V271 M473.5 274 V354 M505.5 109 V271 M505.5 274 V354 M537.5 109 V271 M537.5 274 V354 M569.5 109 V271 M569.5 274 V354 M601.5 109 V271 M601.5 274 V354 M633.5 109 V271 M633.5 274 V354 M665.5 109 V271 M665.5 274 V354 M697.5 109 V271 M697.5 274 V354 M729.5 109 V271 M729.5 274 V354 M761.5 109 V271 M761.5 274 V354 M793.5 109 V271 M793.5 274 V354 M825.5 109 V271 M825.5 274 V354 M857.5 109 V271 M857.5 274 V354 M889.5 109 V271 M889.5 274 V354 M921.5 109 V271 M921.5 274 V354 M953.5 109 V271 M953.5 274 V354 M985.5 109 V271 M985.5 274 V354 M1017.5 109 V271 M1017.5 274 V354 M1049.5 109 V271 M1049.5 274 V354 M1081.5 109 V271 M1081.5 274 V354 M1113.5 109 V271 M1113.5 274 V354 M1145.5 109 V271 M1145.5 274 V354 M1177.5 109 V271 M1177.5 274 V354 M1209.5 109 V271 M1209.5 274 V354 M1241.5 109 V271 M1241.5 274 V354 M1273.5 109 V271 M1273.5 274 V354 M1305.5 109 V271 M1305.5 274 V354 " stroke="#778899" stroke-dasharray="3,3"/><path d="M345 136.5 H1308 M345 169.5 H1308 M345 202.5 H1308 M345 235.5 H1308 M345 268.5 H1308 " stroke="#778899" stroke-dasharray="3,3"/><path d="M345 299.5 H1308" stroke="#778899" stroke-dasharray="3,3"/><path d="M345 219.5 H1308" stroke="#778899"/><polyline points="344,176.2 361,182.6 377,185.5 393,187.3 409,188.5 425,191.4 441,193.4 457,195.3 473,196.5 489,196.3 505,195.2 521,195.2 537,194.6 553,193.5 569,190.8 585,186.8 601,183.5 617,182.3 633,179.4 649,175.3 665,172.3 681,171.1 697,168.8 713,166 729,163.5 745,161.5 761,160.2 777,159 793,158.3 806,158.8 822,159.6 838,162 854,167 870,176.4 886,184.6 902,192.3 921,202.3 937,210.9 953,217.2 969,223.5 985,225.2 1001,225.2 1017,223.5 1033,222.3 1049,221.5 1065,221.2 1081,220.8 1097,220.3" fill="none" stroke="#ff0000" stroke-width="1.4"/><path d="M345.5 211 V216 M343.0 214.5 H345.5 M345.5 214.5 H348.0 M353.5 211 V222 M351.0 214.5 H353.5 M353.5 220.5 H356.0 M361.5 210 V222 M359.0 220.5 H361.5 M361.5 215.5 H364.0 M369.5 206 V220 M367.0 216.5 H369.5 M369.5 208.5 H372.0 M377.5 204 V213 M375.0 208.5 H377.5 M377.5 205.5 H380.0 M385.5 191 V208 M383.0 205.5 H385.5 M385.5 193.5 H388.0 M393.5 193 V203 M391.0 193.5 H393.5 M393.5 202.5 H396.0 M401.5 195 V203 M399.0 200.5 H401.5 M401.5 196.5 H404.0 M409.5 195 V210 M407.0 196.5 H409.5 M409.5 199.5 H412.0 M417.5 193 V215 M415.0 199.5 H417.5 M417.5 206.5 H420.0 M425.5 197 V218 M423.0 206.5 H425.5 M425.5 205.5 H428.0 M433.5 197 V214 M431.0 205.5 H433.5 M433.5 206.5 H436.0 M441.5 206 V221 M439.0 206.5 H441.5 M441.5 209.5 H444.0 M449.5 201 V215 M447.0 209.5 H449.5 M449.5 202.5 H452.0 M457.5 197 V214 M455.0 202.5 H457.5 M457.5 205.5 H460.0 M465.5 197 V213 M463.0 205.5 H465.5 M465.5 200.5 H468.0 M473.5 199 V229 M471.0 201.5 H473.5 M473.5 208.5 H476.0 M481.5 181 V216 M479.0 208.5 H481.5 M481.5 199.5 H484.0 M489.5 189 V201 M487.0 199.5 H489.5 M489.5 190.5 H492.0 M497.5 180 V194 M495.0 190.5 H497.5 M497.5 188.5 H500.0 M505.5 183 V193 M503.0 187.5 H505.5 M505.5 186.5 H508.0 M513.5 184 V199 M511.0 186.5 H513.5 M513.5 197.5 H516.0 M521.5 194 V203 M519.0 197.5 H521.5 M521.5 196.5 H524.0 M529.5 190 V199 M527.0 196.5 H529.5 M529.5 194.5 H532.0 M537.5 190 V199 M535.0 194.5 H537.5 M537.5 194.5 H540.0 M545.5 191 V203 M543.0 194.5 H545.5 M545.5 196.5 H548.0 M553.5 166 V198 M551.0 194.5 H553.5 M553.5 175.5 H556.0 M561.5 170 V182 M559.0 175.5 H561.5 M561.5 176.5 H564.0 M569.5 162 V177 M567.0 176.5 H569.5 M569.5 169.5 H572.0 M577.5 155 V172 M575.0 169.5 H577.5 M577.5 162.5 H580.0 M585.5 155 V166 M583.0 162.5 H585.5 M585.5 163.5 H588.0 M593.5 151 V165 M591.0 163.5 H593.5 M593.5 158.5 H596.0 M601.5 159 V179 M599.0 160.5 H601.5 M601.5 176.5 H604.0 M609.5 169 V183 M607.0 176.5 H609.5 M609.5 176.5 H612.0 M617.5 161 V179 M615.0 176.5 H617.5 M617.5 166.5 H620.0 M625.5 157 V170 M623.0 166.5 H625.5 M625.5 160.5 H628.0 M633.5 148 V167 M631.0 160.5 H633.5 M633.5 165.5 H636.0 M641.5 158 V182 M639.0 165.5 H641.5 M641.5 175.5 H644.0 M649.5 135 V192 M647.0 175.5 H649.5 M649.5 139.5 H652.0 M657.5 117 V145 M655.0 138.5 H657.5 M657.5 142.5 H660.0 M665.5 134 V160 M663.0 142.5 H665.5 M665.5 158.5 H668.0 M673.5 155 V172 M671.0 158.5 H673.5 M673.5 160.5 H676.0 M681.5 158 V179 M679.0 160.5 H681.5 M681.5 170.5 H684.0 M689.5 154 V171 M687.0 170.5 H689.5 M689.5 160.5 H692.0 M697.5 148 V166 M695.0 160.5 H697.5 M697.5 149.5 H700.0 M705.5 146 V155 M703.0 148.5 H705.5 M705.5 154.5 H708.0 M713.5 144 V155 M711.0 154.5 H713.5 M713.5 146.5 H716.0 M721.5 144 V154 M719.0 147.5 H721.5 M721.5 147.5 H724.0 M729.5 145 V152 M727.0 147.5 H729.5 M729.5 147.5 H732.0 M737.5 145 V153 M735.0 148.5 H737.5 M737.5 148.5 H740.0 M745.5 139 V155 M743.0 148.5 H745.5 M745.5 148.5 H748.0 M753.5 145 V156 M751.0 148.5 H753.5 M753.5 150.5 H756.0 M761.5 149 V161 M759.0 149.5 H761.5 M761.5 156.5 H764.0 M769.5 151 V159 M767.0 156.5 H769.5 M769.5 153.5 H772.0 M777.5 150 V157 M775.0 153.5 H777.5 M777.5 153.5 H780.0 M785.5 143 V158 M783.0 153.5 H785.5 M785.5 152.5 H788.0 M793.5 137 V154 M791.0 152.5 H793.5 M793.5 150.5 H796.0 M801.5 150 V172 M799.0 150.5 H801.5 M801.5 169.5 H804.0 M809.5 155 V173 M807.0 168.5 H809.5 M809.5 162.5 H812.0 M817.5 158 V174 M815.0 162.5 H817.5 M817.5 166.5 H820.0 M825.5 162 V174 M823.0 166.5 H825.5 M825.5 168.5 H828.0 M833.5 159 V186 M831.0 168.5 H833.5 M833.5 182.5 H836.0 M841.5 166 V199 M839.0 182.5 H841.5 M841.5 194.5 H844.0 M849.5 186 V209 M847.0 193.5 H849.5 M849.5 200.5 H852.0 M857.5 195 V234 M855.0 200.5 H857.5 M857.5 222.5 H860.0 M865.5 212 V233 M863.0 222.5 H865.5 M865.5 214.5 H868.0 M873.5 213 V227 M871.0 215.5 H873.5 M873.5 217.5 H876.0 M881.5 203 V239 M879.0 217.5 H881.5 M881.5 235.5 H884.0 M889.5 233 V251 M887.0 235.5 H889.5 M889.5 245.5 H892.0 M897.5 241 V252 M895.0 245.5 H897.5 M897.5 248.5 H900.0 M905.5 245 V251 M903.0 247.5 H905.5 M905.5 246.5 H908.0 M913.5 244 V254 M911.0 245.5 H913.5 M913.5 250.5 H916.0 M921.5 250 V256 M919.0 250.5 H921.5 M921.5 254.5 H924.0 M929.5 254 V265 M927.0 254.5 H929.5 M929.5 260.5 H932.0 M937.5 255 V267 M935.0 260.5 H937.5 M937.5 258.5 H940.0 M945.5 256 V267 M943.0 258.5 H945.5 M945.5 258.5 H948.0 M953.5 256 V264 M951.0 258.5 H953.5 M953.5 260.5 H956.0 M961.5 254 V263 M959.0 259.5 H961.5 M961.5 257.5 H964.0 M969.5 257 V265 M967.0 258.5 H969.5 M969.5 259.5 H972.0 M977.5 238 V262 M975.0 258.5 H977.5 M977.5 239.5 H980.0 M985.5 229 V248 M983.0 239.5 H985.5 M985.5 236.5 H988.0 M993.5 216 V237 M991.0 236.5 H993.5 M993.5 221.5 H996.0 M1001.5 217 V229 M999.0 221.5 H1001.5 M1001.5 223.5 H1004.0 M1009.5 209 V224 M1007.0 223.5 H1009.5 M1009.5 214.5 H1012.0 M1017.5 209 V219 M1015.0 214.5 H1017.5 M1017.5 214.5 H1020.0 M1025.5 212 V223 M1023.0 214.5 H1025.5 M1025.5 214.5 H1028.0 M1033.5 208 V220 M1031.0 214.5 H1033.5 M1033.5 212.5 H1036.0 M1041.5 209 V219 M1039.0 212.5 H1041.5 M1041.5 217.5 H1044.0 M1049.5 214 V225 M1047.0 217.5 H1049.5 M1049.5 217.5 H1052.0 M1057.5 217 V230 M1055.0 217.5 H1057.5 M1057.5 220.5 H1060.0 M1065.5 215 V221 M1063.0 220.5 H1065.5 M1065.5 220.5 H1068.0 M1073.5 214 V221 M1071.0 219.5 H1073.5 M1073.5 217.5 H1076.0 M1081.5 211 V221 M1079.0 217.5 H1081.5 M1081.5 212.5 H1084.0 M1089.5 211 V220 M1087.0 212.5 H1089.5 M1089.5 217.5 H1092.0 M1097.5 215 V221 M1095.0 219.5 H1097.5 M1097.5 219.5 H1100.0" stroke="#00ff00" fill="none" shape-rendering="crispEdges"/><path d="M345.5 299 V345 M353.5 299 V345 M361.5 299 V345 M369.5 299 V342 M377.5 299 V340 M385.5 299 V334 M393.5 299 V332 M401.5 299 V328 M409.5 299 V327 M417.5 299 V325 M425.5 299 V323 M433.5 299 V322 M441.5 299 V322 M449.5 299 V320 M457.5 299 V319 M465.5 299 V317 M473.5 299 V315 M481.5 299 V314 M489.5 299 V311 M497.5 299 V308 M505.5 299 V305 M513.5 299 V305 M521.5 299 V304 M529.5 299 V303 M537.5 299 V302 M545.5 299 V301 M553.5 299 V301 M561.5 300 V297 M569.5 300 V293 M577.5 300 V290 M585.5 300 V287 M593.5 300 V285 M601.5 300 V286 M609.5 300 V287 M617.5 300 V286 M625.5 300 V285 M633.5 300 V285 M641.5 300 V285 M649.5 300 V282 M657.5 300 V279 M665.5 300 V280 M673.5 300 V281 M681.5 300 V284 M689.5 300 V283 M697.5 300 V283 M705.5 300 V284 M713.5 300 V283 M721.5 300 V282 M729.5 300 V282 M737.5 300 V283 M745.5 300 V283 M753.5 300 V284 M761.5 300 V285 M769.5 300 V287 M777.5 300 V288 M785.5 300 V289 M793.5 300 V288 M801.5 300 V293 M809.5 300 V294 M817.5 300 V296 M825.5 300 V299 M833.5 299 V301 M841.5 299 V307 M849.5 299 V312 M857.5 299 V319 M865.5 299 V323 M873.5 299 V327 M881.5 299 V332 M889.5 299 V337 M897.5 299 V342 M905.5 299 V344 M913.5 299 V347 M921.5 299 V348 M929.5 299 V350 M937.5 299 V351 M945.5 299 V351 M953.5 299 V350 M961.5 299 V348 M969.5 299 V348 M977.5 299 V343 M985.5 299 V339 M993.5 299 V332 M1001.5 299 V326 M1009.5 299 V321 M1017.5 299 V316 M1025.5 299 V312 M1033.5 299 V309 M1041.5 299 V307 M1049.5 299 V305 M1057.5 299 V304 M1065.5 299 V303 M1073.5 299 V302 M1081.5 299 V301 M1089.5 299 V301 M1097.5 299 V301" stroke="#c0c0c0" shape-rendering="crispEdges"/><polyline points="345,343.6 377,344.4 393,342.3 409,339.2 425,336.1 441,328 457,322.8 473,320.2 490,317.6 510,313.3 540,306.3 570,299.9 600,293.4 630,287 660,282.9 685,282.1 710,281.6 765,282.6 790,284.5 815,288 830,291 845,295.5 855,299.4 870,306.3 885,314.4 905,325.7 920,332.1 935,340.2 955,345.9 970,348.3 985,347.5 1000,342.6 1020,333.8 1040,323.3 1055,316.8 1070,309.5 1090,304.7 1097,302.3" fill="none" stroke="#ff0000" stroke-dasharray="3,3"/><rect x="344.5" y="108.5" width="964" height="163" fill="none" stroke="#fff"/><rect x="344.5" y="273.5" width="964" height="81" fill="none" stroke="#fff"/><path d="M1109 109 H1118 L1113.5 114 Z" fill="#778899"/><text x="349" y="120" font-size="10" fill="#fff" xml:space="preserve" textLength="201.5" lengthAdjust="spacingAndGlyphs">EURUSD,H1  1.11357 1.11383 1.11344 1.11349</text><text x="349" y="286" font-size="10" fill="#fff" textLength="151.5" lengthAdjust="spacingAndGlyphs">MACD(12,26,9) 0.000017 -0.000118</text><path d="M1309 136.5 H1312" stroke="#fff"/><text x="1314" y="139.5" font-size="9" fill="#fff">1.12010</text><path d="M1309 169.5 H1312" stroke="#fff"/><text x="1314" y="172.5" font-size="9" fill="#fff">1.11745</text><path d="M1309 202.5 H1312" stroke="#fff"/><text x="1314" y="205.5" font-size="9" fill="#fff">1.11485</text><path d="M1309 235.5 H1312" stroke="#fff"/><text x="1314" y="238.5" font-size="9" fill="#fff">1.11220</text><path d="M1309 268.5 H1312" stroke="#fff"/><text x="1314" y="271.5" font-size="9" fill="#fff">1.10960</text><rect x="1310" y="214" width="41" height="11" fill="#fff"/><text x="1314" y="223" font-size="9" fill="#000">1.11349</text><text x="1312.5" y="284.0" font-size="9" fill="#fff">0.000966</text><text x="1312.5" y="302.5" font-size="9" fill="#fff">0.00</text><text x="1312.5" y="351.0" font-size="9" fill="#fff">-0.002113</text><path d="M1309 299.5 H1312 M1309 274.5 H1311 M1309 354.5 H1311" stroke="#fff"/><text x="344" y="367" font-size="10" fill="#fff" textLength="55" lengthAdjust="spacingAndGlyphs">25 May 2016</text><path d="M409.5 355 V358" stroke="#fff"/><text x="408" y="367" font-size="10" fill="#fff" textLength="58.3" lengthAdjust="spacingAndGlyphs">25 May 08:00</text><path d="M473.5 355 V358" stroke="#fff"/><text x="472" y="367" font-size="10" fill="#fff" textLength="58.3" lengthAdjust="spacingAndGlyphs">25 May 16:00</text><path d="M537.5 355 V358" stroke="#fff"/><text x="536" y="367" font-size="10" fill="#fff" textLength="58.3" lengthAdjust="spacingAndGlyphs">26 May 00:00</text><path d="M601.5 355 V358" stroke="#fff"/><text x="600" y="367" font-size="10" fill="#fff" textLength="58.3" lengthAdjust="spacingAndGlyphs">26 May 08:00</text><path d="M665.5 355 V358" stroke="#fff"/><text x="664" y="367" font-size="10" fill="#fff" textLength="58.3" lengthAdjust="spacingAndGlyphs">26 May 16:00</text><path d="M729.5 355 V358" stroke="#fff"/><text x="728" y="367" font-size="10" fill="#fff" textLength="58.3" lengthAdjust="spacingAndGlyphs">27 May 00:00</text><path d="M793.5 355 V358" stroke="#fff"/><text x="792" y="367" font-size="10" fill="#fff" textLength="58.3" lengthAdjust="spacingAndGlyphs">27 May 08:00</text><path d="M857.5 355 V358" stroke="#fff"/><text x="856" y="367" font-size="10" fill="#fff" textLength="58.3" lengthAdjust="spacingAndGlyphs">27 May 16:00</text><path d="M921.5 355 V358" stroke="#fff"/><text x="920" y="367" font-size="10" fill="#fff" textLength="58.3" lengthAdjust="spacingAndGlyphs">30 May 01:00</text><path d="M985.5 355 V358" stroke="#fff"/><text x="984" y="367" font-size="10" fill="#fff" textLength="58.3" lengthAdjust="spacingAndGlyphs">30 May 09:00</text><path d="M1049.5 355 V358" stroke="#fff"/><text x="1048" y="367" font-size="10" fill="#fff" textLength="58.3" lengthAdjust="spacingAndGlyphs">30 May 17:00</text></svg>
<div class="a" style="left:342px;top:378px;width:1011px;height:18px;background:#f0f0f0"></div>
<div class="a" style="left:430px;top:380px;width:1px;height:14px;background:#7a7a7a"></div>
<div class="a" style="left:518px;top:380px;width:1px;height:14px;background:#7a7a7a"></div>
<div class="a" style="left:602px;top:380px;width:1px;height:14px;background:#7a7a7a"></div>
<div class="a" style="left:690px;top:380px;width:1px;height:14px;background:#7a7a7a"></div>
<div class="a" style="left:786px;top:380px;width:1px;height:14px;background:#7a7a7a"></div>
<div class="a" style="left:862px;top:380px;width:1px;height:14px;background:#7a7a7a"></div>
<div class="a" style="left:930px;top:380px;width:1px;height:14px;background:#7a7a7a"></div>
<div class="a" style="left:1054px;top:380px;width:1px;height:14px;background:#7a7a7a"></div>
<div class="a" style="left:1178px;top:380px;width:1px;height:14px;background:#7a7a7a"></div>
<div class="a" style="left:1302px;top:380px;width:1px;height:14px;background:#7a7a7a"></div>
<svg style="left:0;top:0" width="1363" height="725" font-family="Liberation Sans"><text x="357.0" y="391" font-size="11.5" fill="#6d6d6d" textLength="62.5" lengthAdjust="spacingAndGlyphs">GBPUSD,H4</text><text x="440.9" y="391" font-size="11.5" fill="#6d6d6d" textLength="64.6" lengthAdjust="spacingAndGlyphs">USDCHF,M1</text><text x="528.0" y="391" font-size="11.5" fill="#6d6d6d" textLength="62.9" lengthAdjust="spacingAndGlyphs">OIL.WTI.,H1</text><text x="614.1" y="391" font-size="11.5" fill="#6d6d6d" textLength="63.6" lengthAdjust="spacingAndGlyphs">EURGBP.,H1</text><text x="701.8" y="391" font-size="11.5" fill="#6d6d6d" textLength="72.4" lengthAdjust="spacingAndGlyphs">EURUSD,Daily</text><text x="796.8" y="391" font-size="11.5" fill="#6d6d6d" textLength="53.2" lengthAdjust="spacingAndGlyphs">DE.30..,H1</text><text x="872.2" y="391" font-size="11.5" fill="#6d6d6d" textLength="46.8" lengthAdjust="spacingAndGlyphs">OILs..,H1</text><text x="940.8" y="391" font-size="11.5" fill="#6d6d6d" textLength="102.2" lengthAdjust="spacingAndGlyphs">EURUSD,H1 (visual)</text><text x="1064.4" y="391" font-size="11.5" fill="#6d6d6d" textLength="102.9" lengthAdjust="spacingAndGlyphs">EURUSD,H1 (visual)</text><text x="1188.3" y="391" font-size="11.5" fill="#6d6d6d" textLength="102.7" lengthAdjust="spacingAndGlyphs">EURUSD,H1 (visual)</text></svg>
<div class="a" style="left:1314px;top:380px;width:1px;height:13px;background:#9a7a7a"></div>
<svg style="left:1319px;top:382px" width="30" height="10"><path d="M6 1 V9 L2 5 Z" fill="#a0a0a0"/><path d="M20 1 V9 L24 5 Z" fill="#000"/></svg>
<div class="a" style="left:4px;top:397px;width:1349px;height:297px;background:#f0f0f0;border-left:1px solid #c4c4c4"></div>
<svg style="left:8px;top:402px" width="9" height="9"><path d="M1.8 2 L7.2 7 M7.2 2 L1.8 7" stroke="#000" stroke-width="1.7"/></svg>
<div class="a" style="left:6px;top:415px;width:13px;height:276px;background:#adc5e3"></div>
<div class="t l" style="left:-5px;top:663px;width:35px;transform:rotate(-90deg);transform-origin:center;line-height:14px;height:14px;font-size:11.5px;color:#1a1a2a">Tester</div>
<div class="a" style="left:20px;top:401px;width:1331px;height:267px;background:#fff;border:1px solid #a0a0a0;border-bottom:none;border-right-color:#c8c8c8"></div>
<div class="a" style="left:21px;top:402px;width:1311px;height:24px;background:#fcfcfc"></div>
<div class="a" style="left:107px;top:402px;width:1px;height:24px;background:#e3ebf5"></div>
<div class="a" style="left:325px;top:402px;width:1px;height:24px;background:#e3ebf5"></div>
<div class="a" style="left:423px;top:402px;width:1px;height:24px;background:#e3ebf5"></div>
<div class="a" style="left:521px;top:402px;width:1px;height:24px;background:#e3ebf5"></div>
<div class="a" style="left:608px;top:402px;width:1px;height:24px;background:#e3ebf5"></div>
<div class="a" style="left:739px;top:402px;width:1px;height:24px;background:#e3ebf5"></div>
<div class="a" style="left:870px;top:402px;width:1px;height:24px;background:#e3ebf5"></div>
<div class="a" style="left:1001px;top:402px;width:1px;height:24px;background:#e3ebf5"></div>
<div class="a" style="left:1164px;top:402px;width:1px;height:24px;background:#e3ebf5"></div>
<div class="t" style="left:27px;top:404px">#</div>
<div class="t r" style="left:241px;width:80px;top:404px">Time</div>
<div class="t r" style="left:337px;width:80px;top:404px">Type</div>
<div class="t r" style="left:436px;width:80px;top:404px">Order</div>
<div class="t r" style="left:523px;width:80px;top:404px">Size</div>
<div class="t r" style="left:654px;width:80px;top:404px">Price</div>
<div class="t r" style="left:785px;width:80px;top:404px">S / L</div>
<div class="t r" style="left:916px;width:80px;top:404px">T / P</div>
<div class="t r" style="left:1079px;width:80px;top:404px">Profit</div>
<div class="t r" style="left:1246px;width:80px;top:404px">Balance</div>
<div class="a" style="left:21px;top:426px;width:1311px;height:19px;background:#ebebeb"></div>
<div class="a" style="left:21px;top:445px;width:1311px;height:1px;background:#cfcfcf"></div>
<svg style="left:24px;top:429px" width="16" height="17"><path d="M1.5 0.5 H8.5 L11.5 3.5 V12.5 Q11.5 13.5 10.5 13.5 H1.5 Q0.5 13.5 0.5 12.5 V1.5 Q0.5 0.5 1.5 0.5 Z" fill="#f8f8f8" stroke="#5a5a5a"/><path d="M8.5 0.5 V3.5 H11.5" fill="none" stroke="#777"/><circle cx="10.5" cy="11.2" r="3.4" fill="#e84a1a" stroke="#9a2a08" stroke-width="0.7"/></svg>
<div class="t n" style="left:43px;top:426px">1</div>
<div class="t r n" style="left:222px;width:100px;top:426px">2016.04.01 16:00</div>
<div class="t r" style="left:320px;width:100px;top:426px">sell</div>
<div class="t r n" style="left:417px;width:100px;top:426px">1</div>
<div class="t r n" style="left:505px;width:100px;top:426px">10.00</div>
<div class="t r n" style="left:636px;width:100px;top:426px">1.13796</div>
<div class="t r n" style="left:897px;width:100px;top:426px">1.13746</div>
<div class="a" style="left:21px;top:446px;width:1311px;height:19px;background:#ffffff"></div>
<div class="a" style="left:21px;top:465px;width:1311px;height:1px;background:#cfcfcf"></div>
<svg style="left:24px;top:449px" width="14" height="16"><rect x="0.5" y="0.5" width="11.5" height="13.3" rx="1.5" fill="#f8f8f8" stroke="#5a5a5a"/><path d="M6 4 L10.1 7.7 H8.1 V10.4 H3.9 V7.7 H1.9 Z" fill="#1eb01e" stroke="#0a6a0a" stroke-width="0.7"/></svg>
<div class="t n" style="left:43px;top:446px">2</div>
<div class="t r n" style="left:222px;width:100px;top:446px">2016.04.01 17:00</div>
<div class="t r" style="left:320px;width:100.9px;top:446px;letter-spacing:0.9px">t/p</div>
<div class="t r n" style="left:417px;width:100px;top:446px">1</div>
<div class="t r n" style="left:505px;width:100px;top:446px">10.00</div>
<div class="t r n" style="left:636px;width:100px;top:446px">1.13746</div>
<div class="t r n" style="left:897px;width:100px;top:446px">1.13746</div>
<div class="t r n" style="left:1060px;width:100px;top:446px">500.00</div>
<div class="t r n" style="left:1228px;width:100px;top:446px">10500.00</div>
<div class="a" style="left:21px;top:466px;width:1311px;height:19px;background:#ebebeb"></div>
<div class="a" style="left:21px;top:485px;width:1311px;height:1px;background:#cfcfcf"></div>
<svg style="left:24px;top:469px" width="16" height="17"><path d="M1.5 0.5 H8.5 L11.5 3.5 V12.5 Q11.5 13.5 10.5 13.5 H1.5 Q0.5 13.5 0.5 12.5 V1.5 Q0.5 0.5 1.5 0.5 Z" fill="#f8f8f8" stroke="#5a5a5a"/><path d="M8.5 0.5 V3.5 H11.5" fill="none" stroke="#777"/><circle cx="10.5" cy="11.2" r="3.4" fill="#e84a1a" stroke="#9a2a08" stroke-width="0.7"/></svg>
<div class="t n" style="left:43px;top:466px">3</div>
<div class="t r n" style="left:222px;width:100px;top:466px">2016.04.05 07:00</div>
<div class="t r" style="left:320px;width:100px;top:466px">sell</div>
<div class="t r n" style="left:417px;width:100px;top:466px">2</div>
<div class="t r n" style="left:505px;width:100px;top:466px">10.00</div>
<div class="t r n" style="left:636px;width:100px;top:466px">1.13895</div>
<div class="t r n" style="left:897px;width:100px;top:466px">1.13845</div>
<div class="a" style="left:21px;top:486px;width:1311px;height:19px;background:#ffffff"></div>
<div class="a" style="left:21px;top:505px;width:1311px;height:1px;background:#cfcfcf"></div>
<svg style="left:24px;top:489px" width="14" height="16"><rect x="0.5" y="0.5" width="11.5" height="13.3" rx="1.5" fill="#f8f8f8" stroke="#5a5a5a"/><path d="M6 4 L10.1 7.7 H8.1 V10.4 H3.9 V7.7 H1.9 Z" fill="#1eb01e" stroke="#0a6a0a" stroke-width="0.7"/></svg>
<div class="t n" style="left:43px;top:486px">4</div>
<div class="t r n" style="left:222px;width:100px;top:486px">2016.04.05 08:00</div>
<div class="t r" style="left:320px;width:100.9px;top:486px;letter-spacing:0.9px">t/p</div>
<div class="t r n" style="left:417px;width:100px;top:486px">2</div>
<div class="t r n" style="left:505px;width:100px;top:486px">10.00</div>
<div class="t r n" style="left:636px;width:100px;top:486px">1.13845</div>
<div class="t r n" style="left:897px;width:100px;top:486px">1.13845</div>
<div class="t r n" style="left:1060px;width:100px;top:486px">500.00</div>
<div class="t r n" style="left:1228px;width:100px;top:486px">11000.00</div>
<div class="a" style="left:21px;top:506px;width:1311px;height:19px;background:#ebebeb"></div>
<div class="a" style="left:21px;top:525px;width:1311px;height:1px;background:#cfcfcf"></div>
<svg style="left:24px;top:509px" width="16" height="17"><path d="M1.5 0.5 H8.5 L11.5 3.5 V12.5 Q11.5 13.5 10.5 13.5 H1.5 Q0.5 13.5 0.5 12.5 V1.5 Q0.5 0.5 1.5 0.5 Z" fill="#f8f8f8" stroke="#5a5a5a"/><path d="M8.5 0.5 V3.5 H11.5" fill="none" stroke="#777"/><circle cx="10.5" cy="11.2" r="3.4" fill="#e84a1a" stroke="#9a2a08" stroke-width="0.7"/></svg>
<div class="t n" style="left:43px;top:506px">5</div>
<div class="t r n" style="left:222px;width:100px;top:506px">2016.04.12 13:00</div>
<div class="t r" style="left:320px;width:100px;top:506px">sell</div>
<div class="t r n" style="left:417px;width:100px;top:506px">3</div>
<div class="t r n" style="left:505px;width:100px;top:506px">10.00</div>
<div class="t r n" style="left:636px;width:100px;top:506px">1.14085</div>
<div class="t r n" style="left:897px;width:100px;top:506px">1.14035</div>
<div class="a" style="left:21px;top:526px;width:1311px;height:19px;background:#ffffff"></div>
<div class="a" style="left:21px;top:545px;width:1311px;height:1px;background:#cfcfcf"></div>
<svg style="left:24px;top:529px" width="14" height="16"><rect x="0.5" y="0.5" width="11.5" height="13.3" rx="1.5" fill="#f8f8f8" stroke="#5a5a5a"/><path d="M6 4 L10.1 7.7 H8.1 V10.4 H3.9 V7.7 H1.9 Z" fill="#1eb01e" stroke="#0a6a0a" stroke-width="0.7"/></svg>
<div class="t n" style="left:43px;top:526px">6</div>
<div class="t r n" style="left:222px;width:100px;top:526px">2016.04.12 14:00</div>
<div class="t r" style="left:320px;width:100.9px;top:526px;letter-spacing:0.9px">t/p</div>
<div class="t r n" style="left:417px;width:100px;top:526px">3</div>
<div class="t r n" style="left:505px;width:100px;top:526px">10.00</div>
<div class="t r n" style="left:636px;width:100px;top:526px">1.14035</div>
<div class="t r n" style="left:897px;width:100px;top:526px">1.14035</div>
<div class="t r n" style="left:1060px;width:100px;top:526px">500.00</div>
<div class="t r n" style="left:1228px;width:100px;top:526px">11500.00</div>
<div class="a" style="left:21px;top:546px;width:1311px;height:19px;background:#ebebeb"></div>
<div class="a" style="left:21px;top:565px;width:1311px;height:1px;background:#cfcfcf"></div>
<svg style="left:24px;top:549px" width="16" height="17"><path d="M1.5 0.5 H8.5 L11.5 3.5 V12.5 Q11.5 13.5 10.5 13.5 H1.5 Q0.5 13.5 0.5 12.5 V1.5 Q0.5 0.5 1.5 0.5 Z" fill="#f8f8f8" stroke="#5a5a5a"/><path d="M8.5 0.5 V3.5 H11.5" fill="none" stroke="#777"/><circle cx="10.5" cy="11.2" r="3.4" fill="#e84a1a" stroke="#9a2a08" stroke-width="0.7"/></svg>
<div class="t n" style="left:43px;top:546px">7</div>
<div class="t r n" style="left:222px;width:100px;top:546px">2016.05.17 20:00</div>
<div class="t r" style="left:320px;width:100px;top:546px">sell</div>
<div class="t r n" style="left:417px;width:100px;top:546px">4</div>
<div class="t r n" style="left:505px;width:100px;top:546px">10.00</div>
<div class="t r n" style="left:636px;width:100px;top:546px">1.13163</div>
<div class="t r n" style="left:897px;width:100px;top:546px">1.13113</div>
<div class="a" style="left:21px;top:566px;width:1311px;height:19px;background:#ffffff"></div>
<div class="a" style="left:21px;top:585px;width:1311px;height:1px;background:#cfcfcf"></div>
<svg style="left:24px;top:569px" width="14" height="16"><rect x="0.5" y="0.5" width="11.5" height="13.3" rx="1.5" fill="#f8f8f8" stroke="#5a5a5a"/><path d="M6 4 L10.1 7.7 H8.1 V10.4 H3.9 V7.7 H1.9 Z" fill="#1eb01e" stroke="#0a6a0a" stroke-width="0.7"/></svg>
<div class="t n" style="left:43px;top:566px">8</div>
<div class="t r n" style="left:222px;width:100px;top:566px">2016.05.18 01:00</div>
<div class="t r" style="left:320px;width:100.9px;top:566px;letter-spacing:0.9px">t/p</div>
<div class="t r n" style="left:417px;width:100px;top:566px">4</div>
<div class="t r n" style="left:505px;width:100px;top:566px">10.00</div>
<div class="t r n" style="left:636px;width:100px;top:566px">1.13113</div>
<div class="t r n" style="left:897px;width:100px;top:566px">1.13113</div>
<div class="t r n" style="left:1060px;width:100px;top:566px">491.61</div>
<div class="t r n" style="left:1228px;width:100px;top:566px">11991.61</div>
<div class="a" style="left:21px;top:586px;width:1311px;height:19px;background:#ebebeb"></div>
<div class="a" style="left:21px;top:605px;width:1311px;height:1px;background:#cfcfcf"></div>
<svg style="left:24px;top:589px" width="16" height="17"><path d="M1.5 0.5 H8.5 L11.5 3.5 V12.5 Q11.5 13.5 10.5 13.5 H1.5 Q0.5 13.5 0.5 12.5 V1.5 Q0.5 0.5 1.5 0.5 Z" fill="#f8f8f8" stroke="#5a5a5a"/><path d="M8.5 0.5 V3.5 H11.5" fill="none" stroke="#777"/><circle cx="10.5" cy="11.2" r="3.4" fill="#e84a1a" stroke="#9a2a08" stroke-width="0.7"/></svg>
<div class="t n" style="left:43px;top:586px">9</div>
<div class="t r n" style="left:222px;width:100px;top:586px">2016.05.22 23:00</div>
<div class="t r" style="left:320px;width:100px;top:586px">sell</div>
<div class="t r n" style="left:417px;width:100px;top:586px">5</div>
<div class="t r n" style="left:505px;width:100px;top:586px">10.00</div>
<div class="t r n" style="left:636px;width:100px;top:586px">1.12102</div>
<div class="t r n" style="left:897px;width:100px;top:586px">1.12052</div>
<div class="a" style="left:21px;top:606px;width:1311px;height:19px;background:#ffffff"></div>
<div class="a" style="left:21px;top:625px;width:1311px;height:1px;background:#cfcfcf"></div>
<svg style="left:24px;top:609px" width="14" height="16"><rect x="0.5" y="0.5" width="11.5" height="13.3" rx="1.5" fill="#f8f8f8" stroke="#5a5a5a"/><path d="M6 4 L10.1 7.7 H8.1 V10.4 H3.9 V7.7 H1.9 Z" fill="#1eb01e" stroke="#0a6a0a" stroke-width="0.7"/></svg>
<div class="t n" style="left:43px;top:606px">10</div>
<div class="t r n" style="left:222px;width:100px;top:606px">2016.05.23 11:00</div>
<div class="t r" style="left:320px;width:100.9px;top:606px;letter-spacing:0.9px">t/p</div>
<div class="t r n" style="left:417px;width:100px;top:606px">5</div>
<div class="t r n" style="left:505px;width:100px;top:606px">10.00</div>
<div class="t r n" style="left:636px;width:100px;top:606px">1.12052</div>
<div class="t r n" style="left:897px;width:100px;top:606px">1.12052</div>
<div class="t r n" style="left:1060px;width:100px;top:606px">491.61</div>
<div class="t r n" style="left:1228px;width:100px;top:606px">12483.22</div>
<div class="a" style="left:21px;top:626px;width:1311px;height:19px;background:#ebebeb"></div>
<div class="a" style="left:21px;top:645px;width:1311px;height:1px;background:#cfcfcf"></div>
<svg style="left:24px;top:629px" width="16" height="17"><path d="M1.5 0.5 H8.5 L11.5 3.5 V12.5 Q11.5 13.5 10.5 13.5 H1.5 Q0.5 13.5 0.5 12.5 V1.5 Q0.5 0.5 1.5 0.5 Z" fill="#f8f8f8" stroke="#5a5a5a"/><path d="M8.5 0.5 V3.5 H11.5" fill="none" stroke="#777"/><circle cx="10.5" cy="11.2" r="3.4" fill="#3a8ae0" stroke="#1a4a9a" stroke-width="0.7"/></svg>
<div class="t n" style="left:43px;top:626px">11</div>
<div class="t r n" style="left:222px;width:100px;top:626px">2016.05.23 20:00</div>
<div class="t r" style="left:320px;width:100px;top:626px">buy</div>
<div class="t r n" style="left:417px;width:100px;top:626px">6</div>
<div class="t r n" style="left:505px;width:100px;top:626px">10.00</div>
<div class="t r n" style="left:636px;width:100px;top:626px">1.12250</div>
<div class="t r n" style="left:897px;width:100px;top:626px">1.12300</div>
<div class="a" style="left:21px;top:646px;width:1311px;height:19px;background:#ffffff"></div>
<div class="a" style="left:21px;top:665px;width:1311px;height:1px;background:#cfcfcf"></div>
<svg style="left:24px;top:649px" width="14" height="16"><rect x="0.5" y="0.5" width="11.5" height="13.3" rx="1.5" fill="#f8f8f8" stroke="#5a5a5a"/><path d="M6 4 L10.1 7.7 H8.1 V10.4 H3.9 V7.7 H1.9 Z" fill="#1eb01e" stroke="#0a6a0a" stroke-width="0.7"/></svg>
<div class="t n" style="left:43px;top:646px">12</div>
<div class="t r n" style="left:222px;width:100px;top:646px">2016.05.23 21:00</div>
<div class="t r" style="left:320px;width:100.9px;top:646px;letter-spacing:0.9px">t/p</div>
<div class="t r n" style="left:417px;width:100px;top:646px">6</div>
<div class="t r n" style="left:505px;width:100px;top:646px">10.00</div>
<div class="t r n" style="left:636px;width:100px;top:646px">1.12300</div>
<div class="t r n" style="left:897px;width:100px;top:646px">1.12300</div>
<div class="t r n" style="left:1060px;width:100px;top:646px">500.00</div>
<div class="t r n" style="left:1228px;width:100px;top:646px">12983.22</div>
<div class="a" style="left:106px;top:427px;width:1px;height:240px;background:#cfcfcf"></div>
<div class="a" style="left:324px;top:427px;width:1px;height:240px;background:#cfcfcf"></div>
<div class="a" style="left:422px;top:427px;width:1px;height:240px;background:#cfcfcf"></div>
<div class="a" style="left:520px;top:427px;width:1px;height:240px;background:#cfcfcf"></div>
<div class="a" style="left:607px;top:427px;width:1px;height:240px;background:#cfcfcf"></div>
<div class="a" style="left:738px;top:427px;width:1px;height:240px;background:#cfcfcf"></div>
<div class="a" style="left:869px;top:427px;width:1px;height:240px;background:#cfcfcf"></div>
<div class="a" style="left:1000px;top:427px;width:1px;height:240px;background:#cfcfcf"></div>
<div class="a" style="left:1163px;top:427px;width:1px;height:240px;background:#cfcfcf"></div>
<div class="a" style="left:21px;top:426px;width:1311px;height:1px;background:#d5d5d5"></div>
<div class="a" style="left:1333px;top:402px;width:17px;height:265px;background:#f0f0f0"></div>
<svg style="left:1335px;top:405px" width="12" height="8"><path d="M1.5 6 L5.5 2 L9.5 6" stroke="#606060" stroke-width="2" fill="none"/></svg>
<svg style="left:1335px;top:656px" width="12" height="8"><path d="M1.5 2 L5.5 6 L9.5 2" stroke="#606060" stroke-width="2" fill="none"/></svg>
<div class="a" style="left:1334px;top:419px;width:15px;height:199px;background:#cdcdcd"></div>
<div class="a" style="left:21px;top:668px;width:1328px;height:1px;background:#000"></div>
<div class="a" style="left:86px;top:668px;width:56px;height:20px;background:#fff;border:1px solid #000;border-top:none;box-shadow:1px 1px 0 #505050"></div>
<div class="t" style="left:33px;top:668px;color:#6d6d6d;letter-spacing:-0.1px">Settings</div>
<div class="t" style="left:95px;top:668px;color:#000;letter-spacing:-0.1px">Results</div>
<div class="t" style="left:153px;top:668px;color:#6d6d6d;letter-spacing:-0.1px">Graph</div>
<div class="t" style="left:204px;top:668px;color:#6d6d6d;letter-spacing:-0.1px">Report</div>
<div class="t" style="left:259px;top:668px;color:#6d6d6d;letter-spacing:-0.1px">Journal</div>
<div class="a" style="left:194px;top:672px;width:1px;height:13px;background:#808080"></div>
<div class="a" style="left:249px;top:672px;width:1px;height:13px;background:#808080"></div>
<div class="a" style="left:307px;top:672px;width:1px;height:13px;background:#808080"></div>
<div class="a" style="left:20px;top:668px;width:1px;height:22px;background:#a0a0a0"></div>
<div class="a" style="left:4px;top:690px;width:1349px;height:1px;background:#fff"></div>
<div class="a" style="left:4px;top:693px;width:1349px;height:1px;background:#a9a9a9"></div>
<div class="a" style="left:1350px;top:401px;width:1px;height:290px;background:#fff"></div>
<div class="a" style="left:4px;top:694px;width:1349px;height:24px;background:#f0f0f0;border-left:1px solid #c4c4c4;border-bottom:1px solid #c9c9c9"></div>
<div class="t l" style="left:7px;top:697px">For Help, press F1</div>
<div class="a" style="left:640px;top:697px;width:1px;height:19px;background:#a8a8a8;box-shadow:1px 0 0 #fff"></div>
<div class="a" style="left:756px;top:697px;width:1px;height:19px;background:#a8a8a8;box-shadow:1px 0 0 #fff"></div>
<div class="a" style="left:858px;top:697px;width:1px;height:19px;background:#a8a8a8;box-shadow:1px 0 0 #fff"></div>
<div class="a" style="left:929px;top:697px;width:1px;height:19px;background:#a8a8a8;box-shadow:1px 0 0 #fff"></div>
<div class="a" style="left:1000px;top:697px;width:1px;height:19px;background:#a8a8a8;box-shadow:1px 0 0 #fff"></div>
<div class="a" style="left:1068px;top:697px;width:1px;height:19px;background:#a8a8a8;box-shadow:1px 0 0 #fff"></div>
<div class="a" style="left:1138px;top:697px;width:1px;height:19px;background:#a8a8a8;box-shadow:1px 0 0 #fff"></div>
<div class="a" style="left:1204px;top:697px;width:1px;height:19px;background:#a8a8a8;box-shadow:1px 0 0 #fff"></div>
<div class="t l" style="left:646px;top:697px">Default</div>
<div class="t l" style="left:762px;top:697px">2016.05.27 00:00</div>
<div class="t l" style="left:864px;top:697px">O: 1.11922</div>
<div class="t l" style="left:935px;top:697px">H: 1.11940</div>
<div class="t l" style="left:1006px;top:697px">L: 1.11897</div>
<div class="t l" style="left:1074px;top:697px">C: 1.11922</div>
<div class="t l" style="left:1144px;top:697px">V: 760</div>
<div class="t l" style="left:1238px;top:697px">13279/5 kb</div>
<svg style="left:1210px;top:700px" width="24" height="14"><rect x="0" y="0" width="2" height="13" fill="#5a7a12"/><rect x="0" y="9.0" width="2" height="4.0" fill="#0c3452"/><rect x="3" y="0" width="2" height="13" fill="#5a7a12"/><rect x="3" y="7.7" width="2" height="5.3" fill="#0c3452"/><rect x="6" y="0" width="2" height="13" fill="#5a7a12"/><rect x="6" y="6.4" width="2" height="6.6" fill="#0c3452"/><rect x="9" y="0" width="2" height="13" fill="#5a7a12"/><rect x="9" y="5.1" width="2" height="7.9" fill="#0c3452"/><rect x="12" y="0" width="2" height="13" fill="#5a7a12"/><rect x="12" y="3.8" width="2" height="9.2" fill="#0c3452"/><rect x="15" y="0" width="2" height="13" fill="#5a7a12"/><rect x="15" y="2.5" width="2" height="10.5" fill="#0c3452"/><rect x="18" y="0" width="2" height="13" fill="#5a7a12"/><rect x="18" y="1.2" width="2" height="11.8" fill="#0c3452"/><rect x="21" y="0" width="2" height="13" fill="#5a7a12"/><rect x="21" y="-0.1" width="2" height="13.1" fill="#0c3452"/></svg>
<svg style="left:1337px;top:701px" width="17" height="17"><path d="M15.5 2 L1.5 16 M15.5 6 L5.5 16 M15.5 10 L9.5 16" stroke="#a8a8a8" stroke-width="1.1"/></svg>
</body></html>
